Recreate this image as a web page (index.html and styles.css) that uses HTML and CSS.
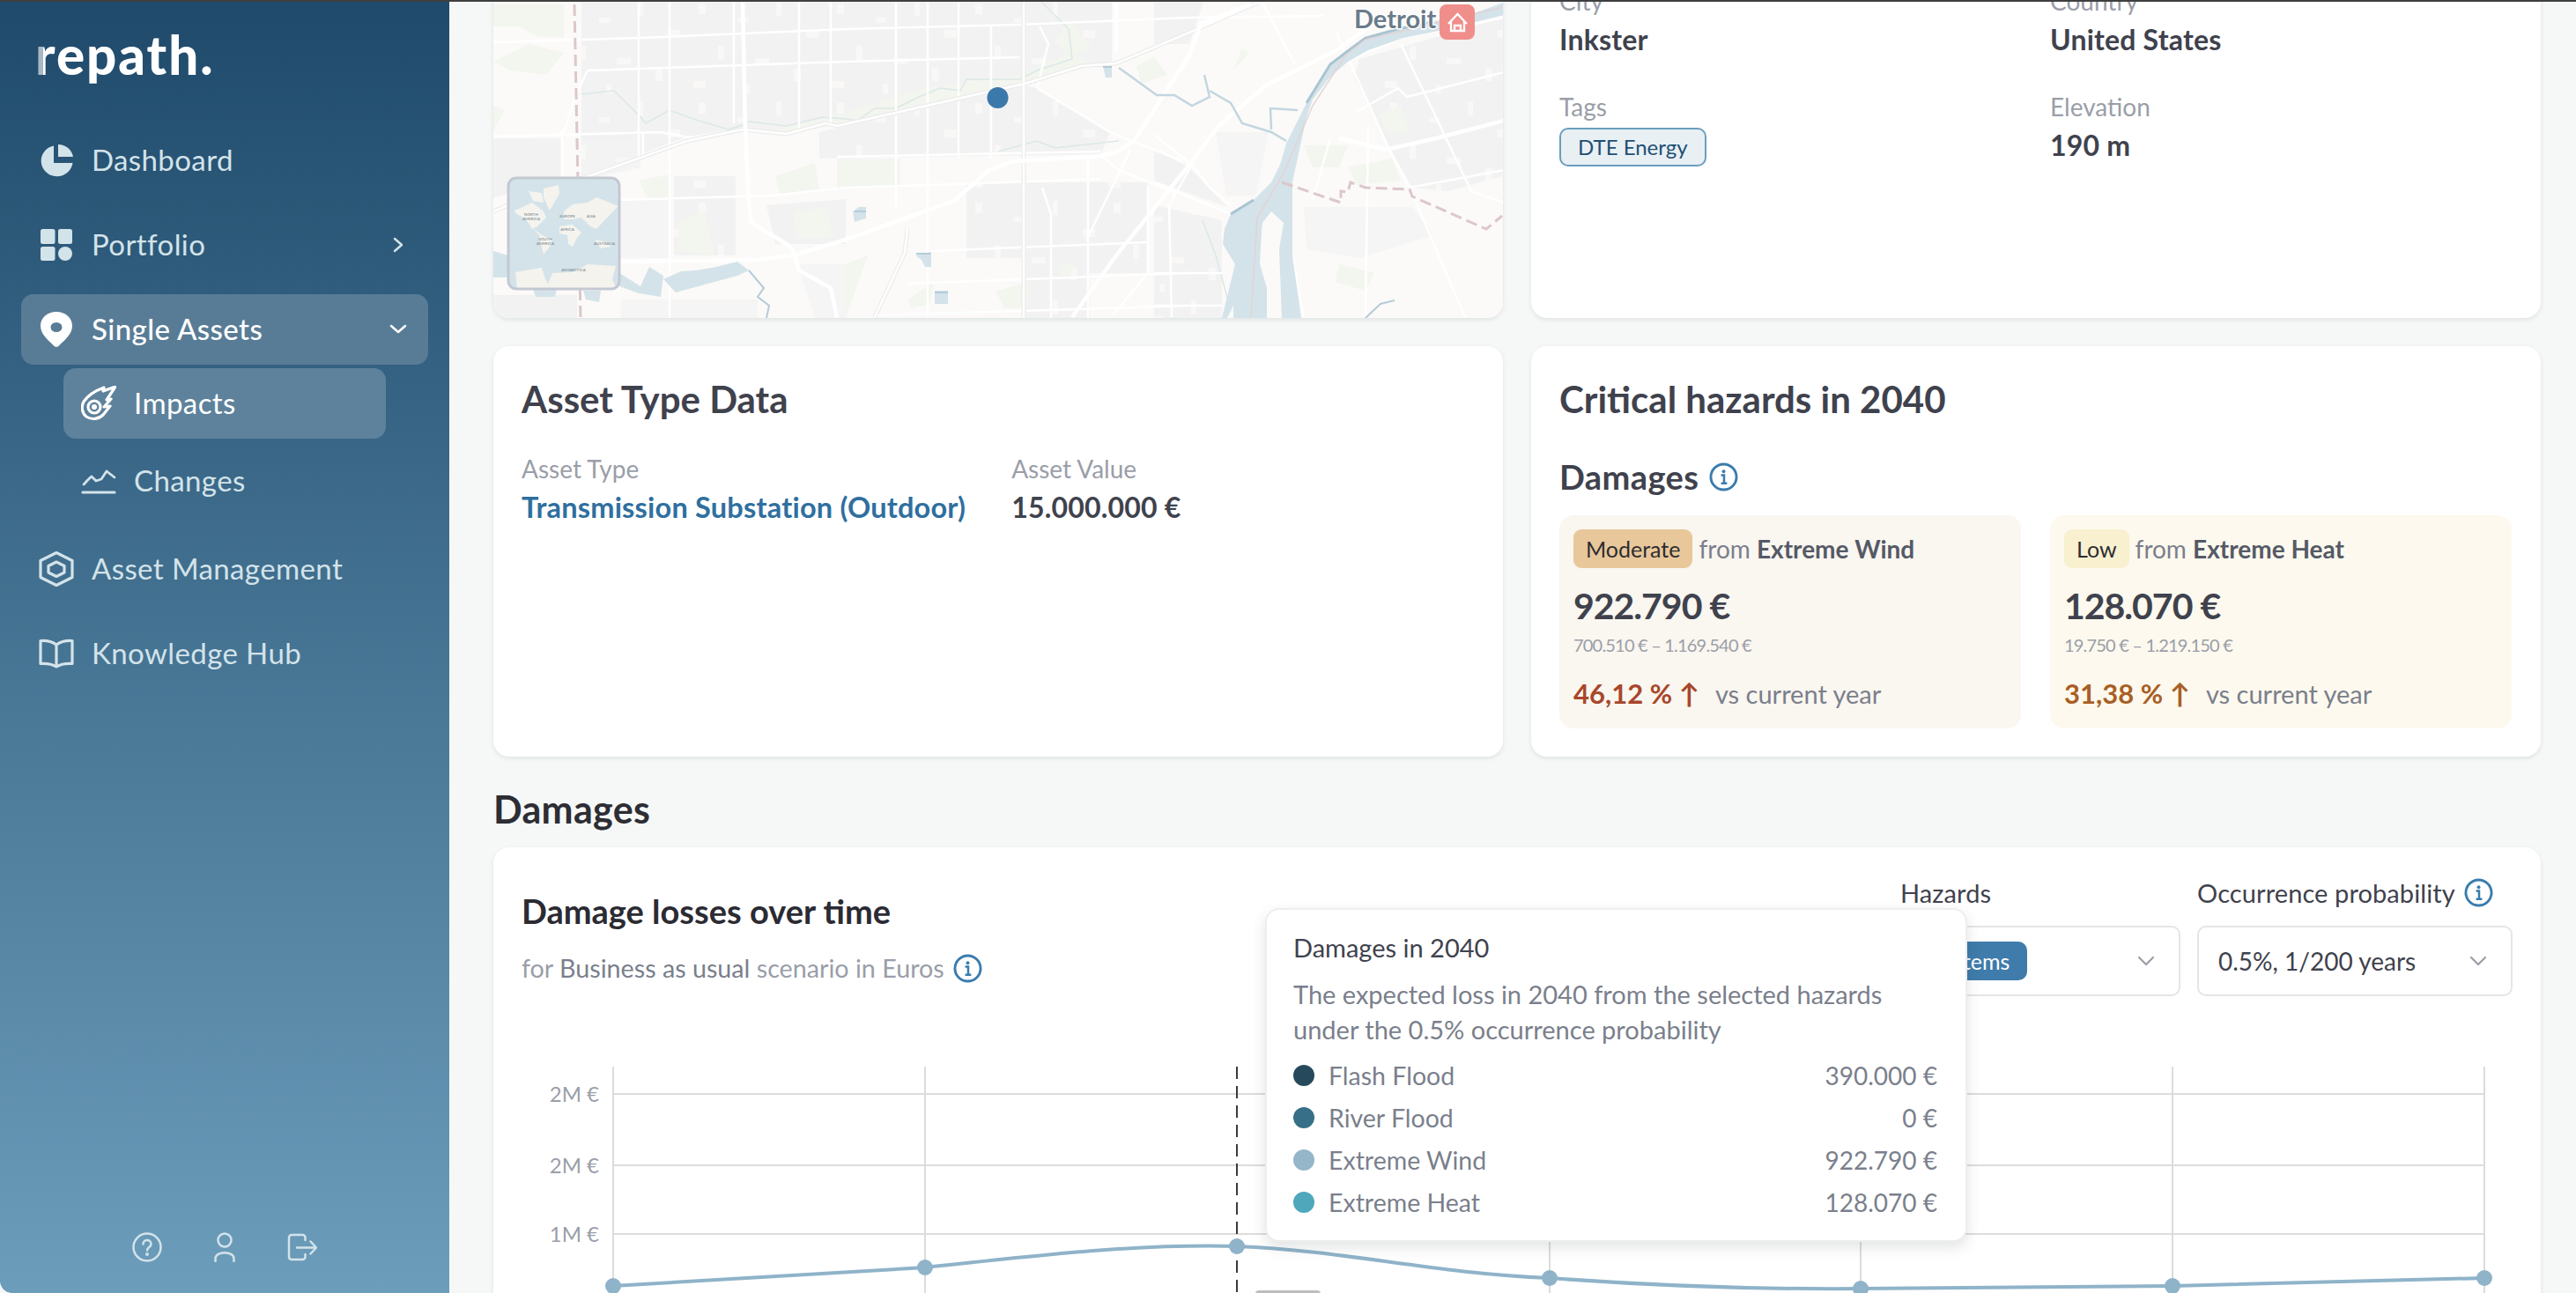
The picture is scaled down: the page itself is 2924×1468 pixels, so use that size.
FILE: index.html
```html
<!DOCTYPE html>
<html lang="en">
<head>
    <meta charset="utf-8">
    <title>repath. - Impacts</title>
    <link rel="stylesheet" href="styles.css">
</head>
<body>
    <svg class="defs" width="0" height="0">
        <symbol id="info" viewBox="0 0 34 34">
            <circle cx="17" cy="17" r="15" fill="none" stroke="currentColor" stroke-width="3"/>
            <circle cx="17" cy="10.5" r="2" fill="currentColor"/>
            <path d="M14 15h3.5v9M14 24.500h7" fill="none" stroke="currentColor" stroke-width="2.600"/>
        </symbol>
        <pattern id="patches" width="157" height="113" patternUnits="userSpaceOnUse">
            <rect x="8" y="4" width="8" height="12" fill="#f9f8f7"/>
            <rect x="52" y="20" width="12" height="6" fill="#f9f8f7"/>
            <rect x="96" y="2" width="6" height="16" fill="#f9f8f7"/>
            <rect x="130" y="34" width="14" height="9" fill="#f9f8f7"/>
            <rect x="30" y="52" width="7" height="16" fill="#f9f8f7"/>
            <rect x="72" y="66" width="16" height="7" fill="#f9f8f7"/>
            <rect x="116" y="78" width="8" height="14" fill="#f9f8f7"/>
            <rect x="2" y="92" width="14" height="8" fill="#f9f8f7"/>
            <rect x="60" y="96" width="6" height="10" fill="#f9f8f7"/>
        </pattern>
    </svg>

    <div class="topbar"></div>

    <div class="app">
        <aside class="sidebar">
            <div class="logo"><span class="logoR">r</span>epath.</div>
            <nav class="nav">
                <a class="navItem">
                    <svg class="navIcon" viewBox="0 0 40 40"><path d="M17 4.500A18 17.500 0 1 0 38.500 24H17z" fill="currentColor" transform="translate(0 -1)"/><path d="M22 2c8 0 15.500 5.500 17 14H22z" fill="currentColor"/></svg>
                    <span>Dashboard</span>
                </a>
                <a class="navItem">
                    <svg class="navIcon" viewBox="0 0 40 40"><rect x="2" y="2" width="16.500" height="17" rx="2.500" fill="currentColor"/><rect x="22" y="2" width="16" height="17" rx="2.500" fill="currentColor"/><rect x="2" y="22" width="16.500" height="16" rx="2.500" fill="currentColor"/><ellipse cx="30" cy="30" rx="8" ry="8" fill="currentColor"/></svg>
                    <span>Portfolio</span>
                    <svg class="chevron" viewBox="0 0 20 20"><path d="M6 3l8 7-8 7" fill="none" stroke="currentColor" stroke-width="2.500" stroke-linecap="round" stroke-linejoin="round"/></svg>
                </a>
                <a class="navItem navOpen">
                    <svg class="navIcon" viewBox="0 0 40 40"><path fill-rule="evenodd" d="M20 0C10 0 2 6.500 2 16c0 10 9 16 15 22.500 1.600 1.800 4.400 1.800 6 0C29 32 38 26 38 16 38 6.500 30 0 20 0zm0 12a6.500 5.500 0 1 1 0 11 6.500 5.500 0 0 1 0-11z" fill="currentColor"/></svg>
                    <span>Single Assets</span>
                    <svg class="chevron" viewBox="0 0 20 20"><path d="M2 6l8 7 8-7" fill="none" stroke="currentColor" stroke-width="2.500" stroke-linecap="round" stroke-linejoin="round"/></svg>
                </a>
                <div class="subNav">
                    <a class="subItem subActive">
                        <svg class="navIcon" viewBox="0 0 40 40" fill="none" stroke="currentColor" stroke-width="3.200" stroke-linejoin="round" stroke-linecap="round"><path d="M39 1L25 6l1-4C15 6 7 12 3 18c-3 6-2 13 3 17 6 4 14 3 19-2l8-10-7 1 8-9-5 1z"/><circle cx="15" cy="24" r="7"/><circle cx="15" cy="24" r="1.500" fill="currentColor"/></svg>
                        <span>Impacts</span>
                    </a>
                    <a class="subItem">
                        <svg class="navIcon" viewBox="0 0 40 40" fill="none" stroke="currentColor" stroke-width="2.800" stroke-linejoin="round" stroke-linecap="round"><path d="M3 24c3-3 6-7 9-9l5 5 6-2 6-9 9 7"/><path d="M2 33h36" stroke-width="3.200"/></svg>
                        <span>Changes</span>
                    </a>
                </div>
                <a class="navItem">
                    <svg class="navIcon" viewBox="0 0 40 40" fill="none" stroke="currentColor" stroke-width="3.200" stroke-linejoin="round"><path d="M20 1.500L38 10.500V29.500L20 38.500 2 29.500V10.500z"/><path d="M20 12L29 16.500V24L20 28.500 11 24V16.500z"/></svg>
                    <span>Asset Management</span>
                </a>
                <a class="navItem">
                    <svg class="navIcon" viewBox="0 0 40 36" fill="none" stroke="currentColor" stroke-width="3.200" stroke-linejoin="round"><path d="M20 8c-4-3-10-5-18-4.500v26c8-.5 14 1 18 3.500 4-2.500 10-4 18-3.500v-26C30 3 24 5 20 8zV32"/></svg>
                    <span>Knowledge Hub</span>
                </a>
            </nav>
            <div class="sideFoot">
                <svg class="footQ" viewBox="0 0 34 34" fill="none" stroke="currentColor" stroke-width="2.500" stroke-linecap="round"><circle cx="17" cy="17" r="15.500"/><path d="M12.500 13.500c0-6 9-6 9 0 0 3.500-4.500 3.500-4.500 7"/><circle cx="17" cy="25" r=".8"/></svg>
                <svg class="footP" viewBox="0 0 24 34" fill="none" stroke="currentColor" stroke-width="2.500" stroke-linecap="round"><circle cx="12" cy="9" r="7.500"/><path d="M1.500 33v-3c0-9 21-9 21 0v3"/></svg>
                <svg class="footE" viewBox="0 0 34 32" fill="none" stroke="currentColor" stroke-width="2.500" stroke-linecap="round" stroke-linejoin="round"><path d="M20.500 8V5a3 3 0 0 0-3-3H5a3 3 0 0 0-3 3v22a3 3 0 0 0 3 3h12.500a3 3 0 0 0 3-3v-3"/><path d="M11 16.500h22M26.500 9.500l6.500 7-6.500 7"/></svg>
            </div>
        </aside>

        <main class="main">
            <div class="mainInner">
                <div class="cols topRow">
                    <div class="card mapCard">
                        <svg class="map" viewBox="560 -98 1146 459">
                            <rect x="560" y="-98" width="1146" height="459" fill="#fbfaf8"/>

                            <!-- built up areas -->
                            <g class="blocks">
                                <polygon points="660,0 1262,0 1262,70 1170,90 950,140 900,150 845,145 780,155 660,200"/>
                                <polygon points="930,150 1163,97 1177,100 1260,150 1250,175 930,180"/>
                                <polygon points="1097,207 1303,207 1303,310 1237,310 1237,361 1163,361 1163,293 1097,293"/>
                                <polygon points="1543,67 1707,20 1707,200 1643,217 1603,213 1577,167 1537,87"/>
                                <polygon points="1480,235 1603,235 1627,267 1543,293 1483,283" opacity=".6"/>
                                <polygon points="1310,0 1367,0 1350,50 1310,50"/>
                                <polygon points="1310,170 1350,190 1393,235 1310,205"/>
                                <polygon points="1310,233 1387,250 1387,361 1310,361"/>
                                <polygon points="1380,150 1440,150 1425,222 1392,222" opacity=".7"/>
                                <polygon points="560,157 637,157 637,200 560,225"/>
                                <polygon points="660,160 727,160 727,190 660,205" opacity=".8"/>
                                <polygon points="703,227 760,225 760,293 703,293" opacity=".7"/>
                                <polygon points="765,200 835,200 835,290 765,290"/>
                                <polygon points="870,233 960,226 960,277 880,277"/>
                                <polygon points="950,180 1022,180 1022,213 950,213" opacity=".8"/>
                                <polygon points="560,335 655,335 655,361 560,361"/>
                                <polygon points="705,340 860,340 860,361 705,361" opacity=".7"/>
                                <polygon points="905,300 960,300 960,361 925,361" opacity=".6"/>
                            </g>
                            <g class="patches">
                                <polygon points="660,0 1262,0 1262,70 1170,90 950,140 900,150 845,145 780,155 660,200"/>
                                <polygon points="930,150 1163,97 1177,100 1260,150 1250,175 930,180"/>
                                <polygon points="1097,207 1303,207 1303,310 1237,310 1237,361 1163,361 1163,293 1097,293"/>
                                <polygon points="1543,67 1707,20 1707,200 1643,217 1603,213 1577,167 1537,87"/>
                                <polygon points="765,200 835,200 835,290 765,290"/>
                                <polygon points="1310,233 1387,250 1387,361 1310,361"/>
                            </g>

                            <!-- parks -->
                            <g class="park">
                                <path d="M870 150L960 128 1000 115 1050 100 1090 95 1160 85 1215 60 1240 72 1170 92 1080 112 960 140 900 150z"/>
                                <path d="M1195 45L1215 25 1240 55 1215 65zM1290 75L1310 65 1325 85 1295 95z"/>
                                <path d="M560 5H640V42H610L590 30H560zM560 70L600 50 640 60 620 85 580 80zM560 120L573 125 560 148zM950 182H1022L1015 210 950 213z"/>
                                <path d="M725 205L760 198 760 225 735 225zM880 200L925 185 930 215 885 220zM770 250L800 240 810 290 770 285zM900 240L940 235 945 270 905 270z"/>
                                <path d="M960 300L985 290 960 361zM1030 340L1060 320 1055 345 1035 350zM1130 330L1170 320 1165 350 1140 350zM1200 300L1220 300 1215 315 1205 315z"/>
                                <path d="M1410 55L1418 60 1400 80zM1480 165L1530 165 1520 190 1490 190zM1530 190L1580 180 1590 205 1540 210zM1565 130L1590 120 1600 150 1575 150z"/>
                                <path d="M1520 300L1560 310 1550 330 1515 320z"/>
                            </g>

                            <path class="stream" d="M660 107L697 103 727 133 733 140 760 125 793 137 827 147 843 142 850 138 893 143 933 133 960 135 973 137 993 123 1017 123 1043 110 1067 100 1090 103 1097 90 1157 90 1177 80 1217 67 1213 33 1183 3"/>
                            <path class="stream" d="M1133 172L1177 160 1197 168 1243 163 1270 160"/>
                            <path class="stream" d="M1395 345L1380 290 1365 250"/>

                            <!-- small roads -->
                            <g class="road thin">
                                <path d="M560 48L727 43 843 38 960 33 1157 28 1350 20 1503 18"/>
                                <path d="M725 0V180M760 0V361M833 0V140M907 0V145M943 0V140"/>
                                <path d="M625 155L640 150 655 105 667 80 960 70 1157 65"/>
                                <path d="M560 155L750 150 787 157M638 155V200M730 150V178"/>
                                <path d="M703 227L877 222 960 213 1117 208 1250 203"/>
                                <path d="M1017 0V235M1053 0V361M1088 0V180M1125 30V180M1235 180V361M1303 210V310L1263 358"/>
                                <path d="M1180 30L1190 50 1177 100M1183 213L1193 243V361"/>
                                <path d="M950 178L1250 172M1057 285L1303 275M1030 322L1350 310M993 358L1350 347"/>
                                <path d="M1177 100L1260 150 1343 183M1250 177L1270 193 1337 220M1233 273L1283 170"/>
                                <path d="M1510 157L1490 227M1590 50L1630 133 1670 217 1707 230M1540 127L1587 100 1597 110 1707 82"/>
                                <path d="M1600 213L1707 193M1553 143L1550 360M1527 70L1590 43 1707 20M1433 3L1470 73"/>
                                <path d="M1330 360L1327 233 1353 187M1310 310H1387M1310 347H1387M1310 207L1397 243M1310 153L1353 187 1373 213 1397 233"/>
                                <path d="M1517 37L1577 170 1600 213 1663 360"/>
                                <path d="M1480 361L1465 280"/>
                            </g>

                            <!-- freeways with a grey edge -->
                            <g class="caseRoad">
                                <path d="M560 240L577 233 660 203 780 160 843 147 893 152 937 140 950 143 1083 113 1163 95 1227 75 1267 72 1350 37 1427 3"/>
                                <path d="M1030 260L1027 287 993 360"/>
                                <path d="M1162 0V361"/>
                            </g>
                            <g class="road">
                                <path class="caseInner" d="M560 240L577 233 660 203 780 160 843 147 893 152 937 140 950 143 1083 113 1163 95 1227 75 1267 72 1350 37 1427 3"/>
                                <path class="caseInner" d="M1030 260L1027 287 993 360"/>
                                <path d="M1162 0V361" class="caseInner"/>
                                <path d="M843 0L846 150 850 227 853 253 893 277 900 283 907 307 943 327 950 361"/>
                                <path d="M577 297H703L860 295 900 290 960 272 1083 228 1123 193 1150 183 1243 178 1267 173 1287 160 1350 63 1363 27 1420 5"/>
                                <path d="M1217 360L1267 290 1350 187 1383 143 1437 97 1517 57 1555 30"/>
                                <path d="M1520 157L1573 170 1630 157 1707 137"/>
                                <path d="M1267 0V60"/>
                            </g>

                            <path class="border" d="M652 5L659 361"/>

                            <!-- water -->
                            <path class="river" d="M1707 3L1673 15 1633 23 1587 33 1550 43 1527 60 1510 73 1483 117 1460 163 1453 187 1443 207 1423 227 1397 243 1390 260 1388 277 1402 300 1387 361H1477L1467 290V207L1483 133 1490 113 1510 87 1530 70 1553 57 1593 43 1643 33 1707 17z"/>
                            <path class="land" d="M1433 253L1443 240 1457 253 1452 283 1455 361H1438V327L1430 300 1432 263zM1393 361L1400 347V361z"/>
                            <path class="riverEdge" d="M1625 25L1587 33 1550 43 1527 60 1510 73 1483 117M1423 227L1397 243"/>
                            <path class="midLine" d="M1707 8L1550 45 1527 63 1490 120 1457 197 1427 247 1420 361"/>
                            <path class="canal" d="M1270 77L1313 108 1333 108 1353 120 1373 110 1367 85M1373 103L1397 117 1410 140 1443 150 1460 160M1443 147L1442 123 1473 125"/>
                            <path class="pond" d="M560 285L577 290V315H560zM703 310L727 325 737 303 753 313 750 337 725 333 703 325zM753 317L767 332 837 313 850 307 837 297 813 303 790 307 773 308zM605 328H632L630 337H608zM662 330H682L680 343 665 340z"/>
                            <path class="creek" d="M850 307L867 327 860 337 873 347 870 361M1550 361L1567 345 1583 341"/>
                            <path class="pond" d="M1252 75H1262V88H1255zM968 240L975 235H983V248L970 252zM1039 290L1057 286V303H1050L1046 295zM1061 330H1076V345H1061z"/>
                            <path class="creek" d="M1252 76H1262M970 240H983M1040 288H1056M1061 332H1076"/>
                            <path class="border" d="M1455 207L1522 230 1522 217 1530 218 1533 207 1550 213 1600 215 1603 223 1687 260 1705 245"/>

                            <!-- world overview -->
                            <g transform="translate(577 202)">
                                <rect width="126" height="126" rx="9" fill="#d4e3e9"/>
                                <path class="worldLand" d="M40 12L57 8 58 18 47 37 40 22zM23 15L38 17 40 28 28 26zM7 37L27 28 40 38 43 45 33 55 27 58 20 47 8 40zM28 57L38 65 50 70 47 78 40 87 37 75 35 65zM63 38L73 30 90 28 100 22 125 32 115 42 100 58 93 55 83 45 73 47 63 47zM58 55L73 53 83 62 78 68 73 78 68 75 67 65 58 63zM98 70L112 73 117 78 105 80zM8 107L38 102 42 115 45 120 50 108 73 107 90 98 122 100 118 115 123 126H10z"/>
                                <text class="worldText" x="26" y="43">NORTH</text>
                                <text class="worldText" x="26" y="48">AMERICA</text>
                                <text class="worldText" x="67" y="45">EUROPE</text>
                                <text class="worldText" x="94" y="45">ASIA</text>
                                <text class="worldText" x="67" y="60">AFRICA</text>
                                <text class="worldText" x="42" y="71">SOUTH</text>
                                <text class="worldText" x="42" y="76">AMERICA</text>
                                <text class="worldText" x="109" y="76">AUSTRALIA</text>
                                <text class="worldText" x="74" y="106">ANTARCTICA</text>
                                <rect width="126" height="126" rx="9" fill="none" stroke="#c3c8d2" stroke-width="3"/>
                            </g>

                            <circle cx="1132.500" cy="111" r="12" fill="#3c79ab"/>
                            <text class="mapLabel" x="1537" y="32">Detroit</text>
                            <rect x="1634" y="5" width="40" height="40" rx="8" fill="#f08e8b"/>
                            <path d="M1644 27L1654.500 16 1665 27M1647 24V35H1662V24M1651 35V29H1658V35" fill="none" stroke="#fff" stroke-width="2.300"/>
                        </svg>
                    </div>
                    <div class="card infoCard">
                        <div class="fields">
                            <div class="field"><div class="label">City</div><div class="value">Inkster</div></div>
                            <div class="field"><div class="label">Country</div><div class="value">United States</div></div>
                            <div class="field"><div class="label">Tags</div><span class="tag">DTE Energy</span></div>
                            <div class="field"><div class="label">Elevation</div><div class="value">190 m</div></div>
                        </div>
                    </div>
                </div>

                <div class="cols midRow">
                    <div class="card bodyCard">
                        <h2 class="cardTitle">Asset Type Data</h2>
                        <div class="assetFields">
                            <div class="field"><div class="label">Asset Type</div><div class="value link">Transmission Substation (Outdoor)</div></div>
                            <div class="field"><div class="label">Asset Value</div><div class="value">15.000.000 €</div></div>
                        </div>
                    </div>
                    <div class="card bodyCard">
                        <h2 class="cardTitle">Critical hazards in 2040</h2>
                        <h3 class="subTitle">Damages <svg class="info"><use href="#info"/></svg></h3>
                        <div class="hazards">
                            <div class="hazard hazardMod">
                                <div class="hazardHead"><span class="badge badgeMod">Moderate</span> <span>from <b>Extreme Wind</b></span></div>
                                <div class="amount">922.790 €</div>
                                <div class="range">700.510 € – 1.169.540 €</div>
                                <div class="delta"><span class="pct pctMod">46,12 % ↑</span><span>vs current year</span></div>
                            </div>
                            <div class="hazard hazardLow">
                                <div class="hazardHead"><span class="badge badgeLow">Low</span> <span>from <b>Extreme Heat</b></span></div>
                                <div class="amount">128.070 €</div>
                                <div class="range">19.750 € – 1.219.150 €</div>
                                <div class="delta"><span class="pct pctLow">31,38 % ↑</span><span>vs current year</span></div>
                            </div>
                        </div>
                    </div>
                </div>

                <h2 class="sectionTitle">Damages</h2>

                <div class="card chartCard">
                    <div class="chartHead">
                        <div class="chartTitles">
                            <h3 class="chartTitle">Damage losses over time</h3>
                            <p class="chartSub"><span>for <b>Business as usual</b> scenario in Euros</span> <svg class="info"><use href="#info"/></svg></p>
                        </div>
                        <div class="filters">
                            <div class="filter filterHazard">
                                <div class="filterLabel">Hazards</div>
                                <div class="select"><span class="chip">4 items</span><svg class="selArrow" viewBox="0 0 20 12"><path d="M2 2l8 8 8-8" fill="none" stroke="currentColor" stroke-width="2.200" stroke-linecap="round" stroke-linejoin="round"/></svg></div>
                            </div>
                            <div class="filter filterProb">
                                <div class="filterLabel">Occurrence probability <svg class="info"><use href="#info"/></svg></div>
                                <div class="select"><span>0.5%, 1/200 years</span><svg class="selArrow" viewBox="0 0 20 12"><path d="M2 2l8 8 8-8" fill="none" stroke="currentColor" stroke-width="2.200" stroke-linecap="round" stroke-linejoin="round"/></svg></div>
                            </div>
                        </div>
                    </div>

                    <svg class="chart" viewBox="592 1200 2260 268">
                        <path class="grid" d="M696 1242H2820M696 1323H2820M696 1401H2820"/>
                        <path class="grid" d="M696 1211V1468M1050 1211V1468M1759 1211V1468M2112 1211V1468M2466 1211V1468M2820 1211V1468"/>
                        <path class="cursor" d="M1404 1211V1468"/>
                        <text class="tick" x="680" y="1251">2M €</text>
                        <text class="tick" x="680" y="1332">2M €</text>
                        <text class="tick" x="680" y="1410">1M €</text>
                        <path class="line" d="M696 1460L1050 1439C1180 1425 1290 1412 1404 1415C1530 1420 1620 1445 1759 1451C1880 1460 1990 1464 2112 1463L2466 1460 2820 1451"/>
                        <g class="pts">
                            <circle cx="696" cy="1460" r="9"/><circle cx="1050" cy="1439" r="9"/><circle cx="1404" cy="1415" r="9"/><circle cx="1759" cy="1451" r="9"/><circle cx="2112" cy="1463" r="9"/><circle cx="2466" cy="1460" r="9"/><circle cx="2820" cy="1451" r="9"/>
                        </g>
                        <rect x="1425" y="1465" width="74" height="10" rx="4" fill="#bdbdbd"/>
                    </svg>

                    <div class="tooltip">
                        <div class="tipTitle">Damages in 2040</div>
                        <p class="tipText">The expected loss in 2040 from the selected hazards under the 0.5% occurrence probability</p>
                        <div class="tipRow"><i class="dot dot1"></i><span>Flash Flood</span><span class="tipVal">390.000 €</span></div>
                        <div class="tipRow"><i class="dot dot2"></i><span>River Flood</span><span class="tipVal">0 €</span></div>
                        <div class="tipRow"><i class="dot dot3"></i><span>Extreme Wind</span><span class="tipVal">922.790 €</span></div>
                        <div class="tipRow"><i class="dot dot4"></i><span>Extreme Heat</span><span class="tipVal">128.070 €</span></div>
                    </div>
                </div>
            </div>
        </main>
    </div>
</body>
</html>
```

FILE: styles.css
```css
*{
    box-sizing: border-box;
}
html, body{
    margin: 0;
    padding: 0;
    height: 100%;
    overflow: hidden;
}
body{
    font-family: "Lato", "Open Sans", sans-serif;
    background-color: #f6f8f7;
    color: #3f424d;
    display: flex;
    flex-direction: column;
}
h2, h3, p{
    margin: 0;
}
.defs{
    position: absolute;
}
.topbar{
    height: 2px;
    background-color: #3f3f3f;
    flex: none;
}
.app{
    flex: 1;
    display: flex;
    min-height: 0;
}

/* sidebar */
.sidebar{
    width: 510px;
    flex: none;
    display: flex;
    flex-direction: column;
    background: linear-gradient(180deg, #1f4a6b 0%, #6c9dbb 100%);
    border-bottom-left-radius: 14px;
    color: #d3e3ea;
    padding: 0 24px 34px;
}
.logo{
    font-size: 60px;
    font-weight: 900;
    color: #fff;
    line-height: 60px;
    margin: 30px 0 0 16px;
    height: 110px;
    letter-spacing: 2px;
}
.logoR{
    background: linear-gradient(90deg, #a8b8c4 0 38%, #fff 38%);
    -webkit-background-clip: text;
    background-clip: text;
    color: transparent;
}
.nav{
    display: flex;
    flex-direction: column;
    gap: 16px;
}
.navItem, .subItem{
    display: flex;
    align-items: center;
    height: 80px;
    border-radius: 14px;
    font-size: 33px;
    letter-spacing: .4px;
}
.navItem span, .subItem span{
    padding-bottom: 3px;
}
.navItem{
    padding-left: 20px;
}
.navIcon{
    width: 40px;
    height: 40px;
    margin-right: 20px;
    flex: none;
}
.chevron{
    width: 20px;
    height: 20px;
    margin-left: auto;
    margin-right: 24px;
}
.navOpen{
    background-color: #597c96;
    color: #fff;
    font-weight: 500;
}
.subNav{
    display: flex;
    flex-direction: column;
    gap: 8px;
    margin: -12px 0 4px 48px;
    width: 366px;
}
.subItem{
    padding-left: 20px;
}
.subActive{
    background-color: #5e829c;
    color: #fff;
}
.sideFoot{
    margin-top: auto;
    display: flex;
    align-items: center;
    padding-left: 126px;
    height: 36px;
}
.footQ{
    width: 34px;
    height: 34px;
    margin-right: 59px;
}
.footP{
    width: 24px;
    height: 34px;
    margin-right: 59px;
}
.footE{
    width: 34px;
    height: 32px;
}

/* main column */
.main{
    flex: 1;
    min-width: 0;
    overflow: hidden;
    padding: 0 40px 0 50px;
}
.mainInner{
    margin-top: -100px;
}
.cols{
    display: grid;
    grid-template-columns: 1146px 1146px;
    gap: 32px;
}
.card{
    background-color: #fff;
    border-radius: 18px;
    box-shadow: 0 2px 5px rgba(60, 70, 80, .12);
}
.topRow{
    height: 459px;
}
.midRow{
    height: 466px;
    margin-top: 32px;
}

/* map */
.mapCard{
    overflow: hidden;
}
.map{
    display: block;
    width: 1146px;
    height: 459px;
}
.blocks{
    fill: #f2f2f3;
}
.patches{
    fill: url(#patches);
}
.park{
    fill: #f3f5ef;
}
.road{
    fill: none;
    stroke: #fff;
    stroke-width: 4.500;
}
.road.thin{
    stroke-width: 2.500;
}
.caseRoad{
    fill: none;
    stroke: #ececec;
    stroke-width: 5;
}
.road .caseInner{
    stroke-width: 2.500;
}
.stream{
    fill: none;
    stroke: #dbe8e6;
    stroke-width: 1.500;
}
.border{
    fill: none;
    stroke: #dcc7cb;
    stroke-width: 3;
    stroke-dasharray: 13 6;
}
.river, .pond{
    fill: #d3e3e9;
}
.riverEdge{
    fill: none;
    stroke: #a9c4d2;
    stroke-width: 3;
}
.midLine{
    fill: none;
    stroke: #e3d3d5;
    stroke-width: 1.500;
}
.land{
    fill: #fbfaf8;
}
.canal{
    fill: none;
    stroke: #c2d6df;
    stroke-width: 2.500;
}
.creek{
    fill: none;
    stroke: #b4ccd8;
    stroke-width: 2;
}
.worldLand{
    fill: #f4f3ee;
}
.worldText{
    font-size: 4.500px;
    fill: #74808a;
    text-anchor: middle;
}
.mapLabel{
    font-size: 29px;
    font-weight: 700;
    fill: #6a7b8a;
    stroke: #fff;
    stroke-width: 3px;
    paint-order: stroke;
}

/* fields */
.infoCard{
    padding: 83px 32px 0;
    overflow: hidden;
}
.fields{
    display: grid;
    grid-template-columns: 557px 1fr;
    row-gap: 43px;
}
.label{
    font-size: 28px;
    line-height: 34px;
    color: #9a9ea8;
    margin-top: -1px;
}
.value{
    font-size: 32px;
    font-weight: 700;
    line-height: 34px;
    margin-top: 10px;
    color: #3f424d;
    letter-spacing: .2px;
}
.value.link{
    color: #2f6f9f;
    font-size: 32.500px;
}
.tag{
    display: inline-block;
    margin-top: 7px;
    height: 44px;
    line-height: 39px;
    padding: 0 19px;
    border: 2px solid #6b9ebf;
    border-radius: 10px;
    background-color: #e8f0f4;
    color: #1f4f73;
    font-size: 24px;
}
.bodyCard{
    padding: 36px 32px 0;
}
.cardTitle{
    font-size: 42px;
    font-weight: 700;
    line-height: 48px;
    color: #3f424d;
}
.assetFields{
    display: flex;
    gap: 52px;
    margin-top: 39px;
}
.subTitle{
    font-size: 38px;
    font-weight: 700;
    line-height: 44px;
    margin-top: 42px;
    display: flex;
    align-items: center;
    gap: 12px;
    letter-spacing: .4px;
}
.info{
    width: 33px;
    height: 33px;
    color: #3a7cae;
    flex: none;
}
.hazards{
    display: grid;
    grid-template-columns: 524px 524px;
    gap: 33px;
    margin-top: 22px;
}
.hazard{
    height: 242px;
    border-radius: 16px;
    padding: 16px;
}
.hazardMod{
    background-color: #faf6f0;
}
.hazardLow{
    background-color: #fdf9ee;
}
.hazardHead{
    display: flex;
    align-items: center;
    gap: 7px;
    height: 44px;
    font-size: 28px;
    color: #7a7f8c;
}
.hazardHead b{
    color: #555a66;
}
.badge{
    height: 44px;
    line-height: 44px;
    padding: 0 14px;
    border-radius: 9px;
    font-size: 25px;
    color: #2c2c30;
}
.badgeMod{
    background-color: #e8c79a;
}
.badgeLow{
    background-color: #f8f0cf;
}
.amount{
    font-size: 41px;
    font-weight: 700;
    line-height: 48px;
    margin-top: 19px;
    letter-spacing: -1px;
}
.range{
    font-size: 20px;
    line-height: 26px;
    margin-top: 7px;
    color: #9a9ea8;
    letter-spacing: -.8px;
}
.delta{
    display: flex;
    align-items: center;
    gap: 18px;
    height: 36px;
    margin-top: 24px;
    font-size: 29px;
    color: #7a7f8c;
}
.pct{
    font-size: 31px;
    font-weight: 700;
}
.pctMod{
    color: #a8472a;
}
.pctLow{
    color: #a85f25;
}

/* damages section */
.sectionTitle{
    font-size: 43px;
    font-weight: 700;
    line-height: 48px;
    margin-top: 36px;
    color: #2d2d35;
    letter-spacing: .3px;
}
.chartCard{
    position: relative;
    margin-top: 19px;
    padding: 36px 32px 0;
    height: 700px;
}
.chartHead{
    display: flex;
    justify-content: space-between;
    height: 133px;
}
.chartTitle{
    font-size: 38px;
    font-weight: 700;
    line-height: 44px;
    margin-top: 14px;
    color: #2b2b33;
}
.chartSub{
    font-size: 28.700px;
    line-height: 36px;
    margin-top: 25px;
    color: #9a9ea8;
    display: flex;
    align-items: center;
    gap: 10px;
}
.chartSub b{
    font-weight: 400;
    color: #7a7f8c;
}
.filters{
    display: flex;
    gap: 19px;
}
.filterHazard{
    width: 318px;
}
.filterProb{
    width: 358px;
}
.filterLabel{
    display: flex;
    align-items: center;
    gap: 10px;
    height: 34px;
    font-size: 29px;
    letter-spacing: .1px;
    margin-top: -2px;
    margin-bottom: 21px;
}
.select{
    display: flex;
    align-items: center;
    justify-content: space-between;
    height: 80px;
    border: 2px solid #e5e5e5;
    border-radius: 10px;
    padding: 0 27px 0 22px;
    font-size: 28px;
}
.chip{
    height: 44px;
    line-height: 44px;
    padding: 0 20px;
    border-radius: 10px;
    background-color: #3f7cab;
    color: #fff;
    font-size: 25px;
}
.selArrow{
    width: 20px;
    height: 12px;
    color: #9a9ea8;
}
.chart{
    display: block;
    width: 2260px;
    height: 268px;
    margin-top: 69px;
}
.grid{
    fill: none;
    stroke: #dcdcdc;
    stroke-width: 2;
}
.cursor{
    fill: none;
    stroke: #3a3a3a;
    stroke-width: 2;
    stroke-dasharray: 14 8;
}
.tick{
    font-size: 24px;
    fill: #9a9ea8;
    text-anchor: end;
}
.line{
    fill: none;
    stroke: #8fb3c9;
    stroke-width: 4;
}
.pts circle{
    fill: #8fb3c9;
}
.tooltip{
    position: absolute;
    left: 876px;
    top: 69px;
    width: 797px;
    height: 379px;
    padding: 25px 32px 0 30px;
    background-color: #fff;
    border: 2px solid #eee;
    border-radius: 16px;
    box-shadow: 0 6px 16px rgba(40, 50, 60, .14);
}
.tipTitle{
    font-size: 29px;
    line-height: 36px;
}
.tipText{
    font-size: 29px;
    line-height: 40px;
    color: #7a7f8c;
    margin: 15px 0 8px;
}
.tipRow{
    display: flex;
    align-items: center;
    height: 48px;
    font-size: 28.500px;
    color: #7a7f8c;
}
.tipVal{
    margin-left: auto;
    font-size: 28px;
}
.dot{
    width: 24px;
    height: 24px;
    border-radius: 50%;
    margin-right: 16px;
}
.dot1{
    background-color: #264a5c;
}
.dot2{
    background-color: #366f87;
}
.dot3{
    background-color: #95b5c9;
}
.dot4{
    background-color: #4ea7bb;
}
```
